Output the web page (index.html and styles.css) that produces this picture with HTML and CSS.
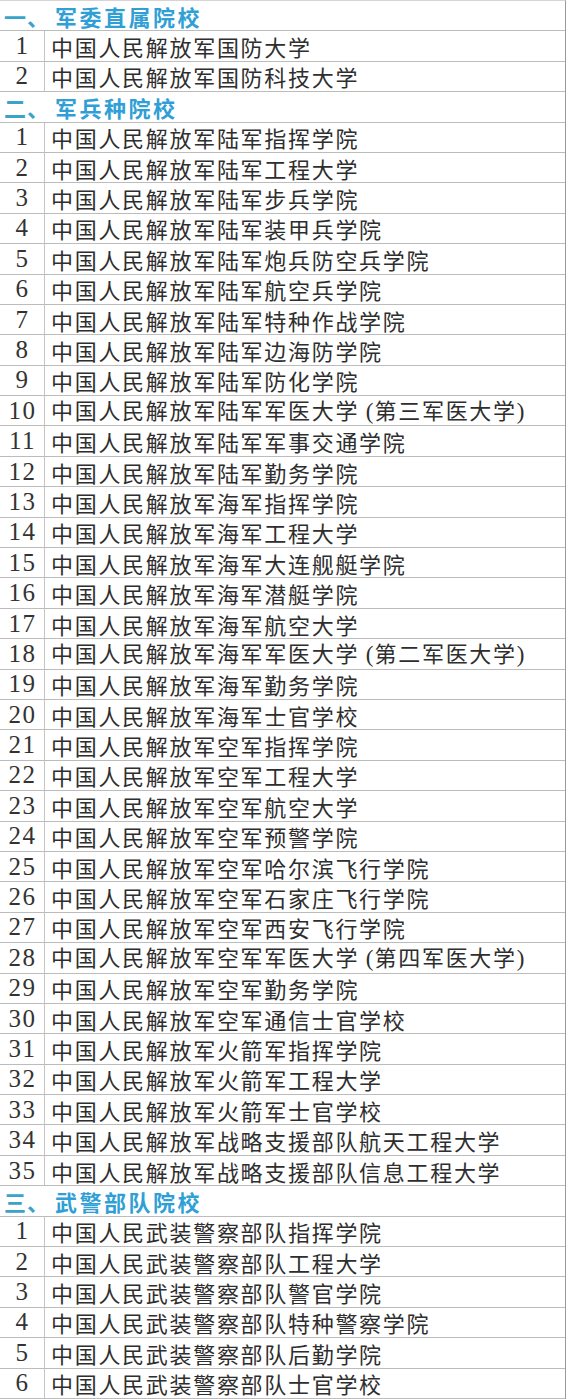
FILE: index.html
```html
<!DOCTYPE html>
<html lang="zh">
<head>
<meta charset="utf-8">
<title>军队院校</title>
<link rel="stylesheet" href="styles.css">
</head>
<body>
<div class="table">
  <div class="row head"><span class="hnum">一、</span><span class="htext">军委直属院校</span></div>
  <div class="row"><span class="num">1</span><span class="name">中国人民解放军国防大学</span></div>
  <div class="row"><span class="num">2</span><span class="name">中国人民解放军国防科技大学</span></div>
  <div class="row head"><span class="hnum">二、</span><span class="htext">军兵种院校</span></div>
  <div class="row"><span class="num">1</span><span class="name">中国人民解放军陆军指挥学院</span></div>
  <div class="row"><span class="num">2</span><span class="name">中国人民解放军陆军工程大学</span></div>
  <div class="row"><span class="num">3</span><span class="name">中国人民解放军陆军步兵学院</span></div>
  <div class="row"><span class="num">4</span><span class="name">中国人民解放军陆军装甲兵学院</span></div>
  <div class="row"><span class="num">5</span><span class="name">中国人民解放军陆军炮兵防空兵学院</span></div>
  <div class="row"><span class="num">6</span><span class="name">中国人民解放军陆军航空兵学院</span></div>
  <div class="row"><span class="num">7</span><span class="name">中国人民解放军陆军特种作战学院</span></div>
  <div class="row"><span class="num">8</span><span class="name">中国人民解放军陆军边海防学院</span></div>
  <div class="row"><span class="num">9</span><span class="name">中国人民解放军陆军防化学院</span></div>
  <div class="row"><span class="num">10</span><span class="name">中国人民解放军陆军军医大学<span class="paren"> (</span>第三军医大学<span class="paren">)</span></span></div>
  <div class="row"><span class="num">11</span><span class="name">中国人民解放军陆军军事交通学院</span></div>
  <div class="row"><span class="num">12</span><span class="name">中国人民解放军陆军勤务学院</span></div>
  <div class="row"><span class="num">13</span><span class="name">中国人民解放军海军指挥学院</span></div>
  <div class="row"><span class="num">14</span><span class="name">中国人民解放军海军工程大学</span></div>
  <div class="row"><span class="num">15</span><span class="name">中国人民解放军海军大连舰艇学院</span></div>
  <div class="row"><span class="num">16</span><span class="name">中国人民解放军海军潜艇学院</span></div>
  <div class="row"><span class="num">17</span><span class="name">中国人民解放军海军航空大学</span></div>
  <div class="row"><span class="num">18</span><span class="name">中国人民解放军海军军医大学<span class="paren"> (</span>第二军医大学<span class="paren">)</span></span></div>
  <div class="row"><span class="num">19</span><span class="name">中国人民解放军海军勤务学院</span></div>
  <div class="row"><span class="num">20</span><span class="name">中国人民解放军海军士官学校</span></div>
  <div class="row"><span class="num">21</span><span class="name">中国人民解放军空军指挥学院</span></div>
  <div class="row"><span class="num">22</span><span class="name">中国人民解放军空军工程大学</span></div>
  <div class="row"><span class="num">23</span><span class="name">中国人民解放军空军航空大学</span></div>
  <div class="row"><span class="num">24</span><span class="name">中国人民解放军空军预警学院</span></div>
  <div class="row"><span class="num">25</span><span class="name">中国人民解放军空军哈尔滨飞行学院</span></div>
  <div class="row"><span class="num">26</span><span class="name">中国人民解放军空军石家庄飞行学院</span></div>
  <div class="row"><span class="num">27</span><span class="name">中国人民解放军空军西安飞行学院</span></div>
  <div class="row"><span class="num">28</span><span class="name">中国人民解放军空军军医大学<span class="paren"> (</span>第四军医大学<span class="paren">)</span></span></div>
  <div class="row"><span class="num">29</span><span class="name">中国人民解放军空军勤务学院</span></div>
  <div class="row"><span class="num">30</span><span class="name">中国人民解放军空军通信士官学校</span></div>
  <div class="row"><span class="num">31</span><span class="name">中国人民解放军火箭军指挥学院</span></div>
  <div class="row"><span class="num">32</span><span class="name">中国人民解放军火箭军工程大学</span></div>
  <div class="row"><span class="num">33</span><span class="name">中国人民解放军火箭军士官学校</span></div>
  <div class="row"><span class="num">34</span><span class="name">中国人民解放军战略支援部队航天工程大学</span></div>
  <div class="row"><span class="num">35</span><span class="name">中国人民解放军战略支援部队信息工程大学</span></div>
  <div class="row head"><span class="hnum">三、</span><span class="htext">武警部队院校</span></div>
  <div class="row"><span class="num">1</span><span class="name">中国人民武装警察部队指挥学院</span></div>
  <div class="row"><span class="num">2</span><span class="name">中国人民武装警察部队工程大学</span></div>
  <div class="row"><span class="num">3</span><span class="name">中国人民武装警察部队警官学院</span></div>
  <div class="row"><span class="num">4</span><span class="name">中国人民武装警察部队特种警察学院</span></div>
  <div class="row"><span class="num">5</span><span class="name">中国人民武装警察部队后勤学院</span></div>
  <div class="row"><span class="num">6</span><span class="name">中国人民武装警察部队士官学校</span></div>
</div>
</body>
</html>
```

FILE: styles.css
```css
html, body {
  margin: 0;
  padding: 0;
  background: #ffffff;
}

.table {
  width: 566px;
  box-sizing: border-box;
  border-top: 1px solid #d4d4d4;
  border-right: 1px solid #9a9a9a;
  font-family: "Noto Sans CJK SC", "Liberation Serif", serif;
  color: #2e2e2e;
}

.row {
  display: flex;
  align-items: center;
  height: 30.4px;
  box-sizing: border-box;
  border-bottom: 1px solid #bcbcbc;
}

.num {
  flex: 0 0 45px;
  align-self: stretch;
  display: flex;
  align-items: center;
  justify-content: center;
  box-sizing: border-box;
  border-right: 1px solid #c4c4c4;
  font-family: "Liberation Serif", serif;
  font-size: 25px;
  letter-spacing: 1.5px;
  padding-left: 1px;
  color: #333333;
}

.name {
  padding-left: 6px;
  font-size: 22px;
  letter-spacing: 1.7px;
  line-height: 1;
  white-space: nowrap;
}

.paren {
  font-family: "Liberation Serif", serif;
  font-size: 23px;
  letter-spacing: 1px;
}

.head {
  padding-left: 4px;
  color: #2f9fd6;
  font-weight: 700;
  font-size: 22px;
  line-height: 1;
}

.hnum {
  color: #3aa3c9;
  letter-spacing: 1px;
  margin-right: 5px;
}

.htext {
  letter-spacing: 2.5px;
}
```
